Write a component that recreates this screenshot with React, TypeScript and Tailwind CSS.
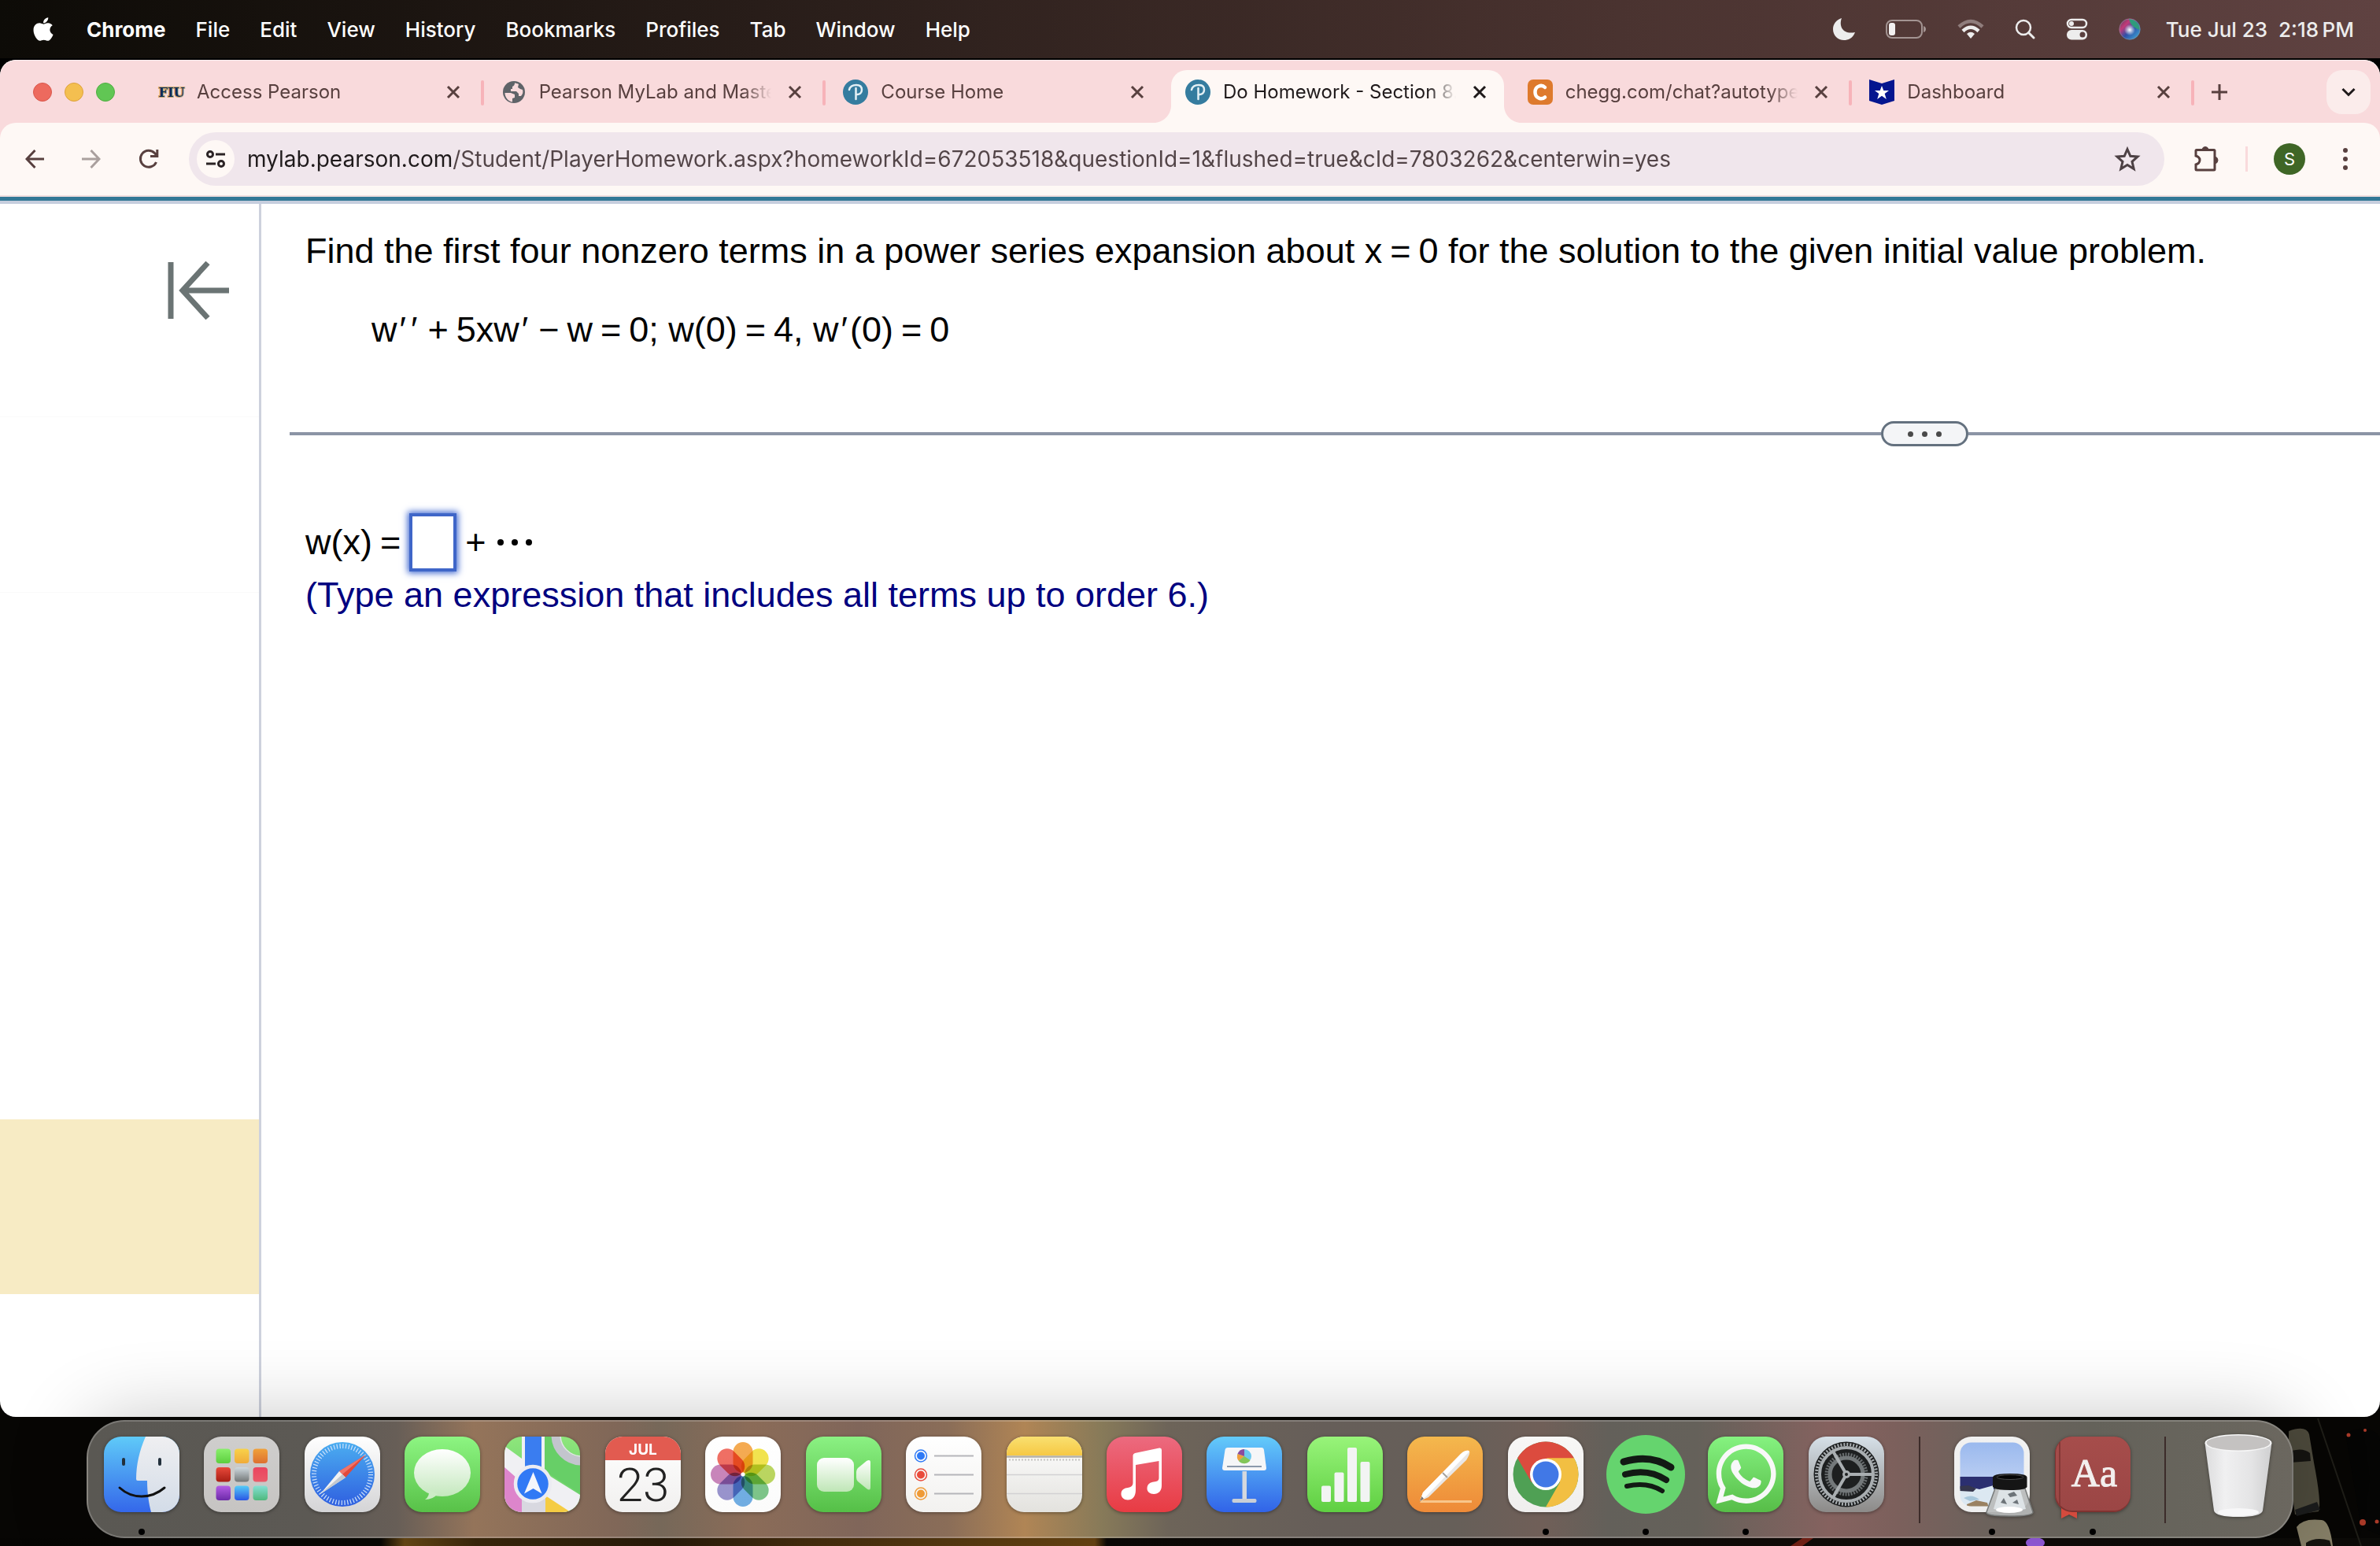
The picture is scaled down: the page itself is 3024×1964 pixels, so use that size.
import type { ReactNode } from "react";
import { FaApple, FaWhatsapp } from "react-icons/fa";

const menus = [
  "File",
  "Edit",
  "View",
  "History",
  "Bookmarks",
  "Profiles",
  "Tab",
  "Window",
  "Help",
];

function MoonIcon() {
  return (
    <svg viewBox="0 0 28 28" className="size-7" fill="#ededed">
      <path d="M11 0C7 11 13 21 28 18C25 26 19 28 14 28C6 28 0 22 0 14C0 8 4 2 11 0Z" />
    </svg>
  );
}

function BatteryIcon() {
  return (
    <svg viewBox="0 0 52 26" className="h-[26px] w-[52px]" fill="none">
      <rect x="1" y="2" width="45" height="22" rx="7" stroke="#a39492" strokeWidth="2" />
      <rect x="4" y="5" width="8" height="16" rx="3" fill="#f2f0f0" />
      <path d="M48 9Q51 10 51 13T48 17Z" fill="#a39492" />
    </svg>
  );
}

function WifiIcon() {
  return (
    <svg viewBox="0 0 34 26" className="h-[26px] w-[34px]" fill="none">
      <path d="M2 10Q17 -4 32 10" stroke="#8f7d7c" strokeWidth="4.5" />
      <path d="M7 15.5Q17 6 27 15.5" stroke="#ededed" strokeWidth="4.5" />
      <path d="M12 19Q17 14.5 22 19L17 25Z" fill="#ededed" />
    </svg>
  );
}

function SpotlightIcon() {
  return (
    <svg viewBox="0 0 26 26" className="size-[26px]" fill="none" stroke="#ededed">
      <circle cx="11" cy="11" r="9" strokeWidth="2.5" />
      <path d="M17.5 17.5L24 24" strokeWidth="3" strokeLinecap="round" />
    </svg>
  );
}

function ControlCenterIcon() {
  return (
    <svg viewBox="0 0 28 28" className="size-7" fill="none">
      <rect x="2" y="2" width="24" height="10" rx="5" stroke="#ededed" strokeWidth="2.5" />
      <circle cx="7" cy="7" r="3" fill="#ededed" />
      <rect x="1" y="15" width="26" height="12.5" rx="6" fill="#ededed" />
      <circle cx="21" cy="21" r="3.5" fill="#5a403f" />
    </svg>
  );
}

function SiriIcon() {
  return (
    <svg viewBox="0 0 28 28" className="size-7">
      <defs>
        <linearGradient id="siri" x1="0" y1="0" x2="1" y2="1">
          <stop offset="0" stopColor="#4a3f5c" />
          <stop offset=".3" stopColor="#c33a78" />
          <stop offset=".55" stopColor="#2e4fa8" />
          <stop offset="1" stopColor="#3fb9e0" />
        </linearGradient>
        <radialGradient id="siriGlow">
          <stop offset="0" stopColor="#fff" />
          <stop offset="1" stopColor="#fff" stopOpacity="0" />
        </radialGradient>
      </defs>
      <circle cx="14" cy="14" r="13.5" fill="url(#siri)" />
      <path d="M13 1C21 1 27 8 27 15C21 13 15 10 13 1Z" fill="#2f9b7c" />
      <circle cx="14" cy="15" r="7" fill="url(#siriGlow)" />
      <circle cx="14" cy="14" r="13" fill="none" stroke="#8b8f9c" strokeWidth="1" opacity=".6" />
    </svg>
  );
}

function MenuBar() {
  return (
    <header className="flex h-[74px] items-center justify-between bg-linear-to-r from-[#0d0b07] from-0% via-[#4a3330] via-68% to-[#5f4241] to-100% pr-[33px] pl-[38px] text-[26px] text-white">
      <nav className="flex items-center gap-[38px]">
        <button aria-label="Apple menu" className="text-[34px]">
          <FaApple />
        </button>
        <button className="font-bold">Chrome</button>
        {menus.map((menu) => (
          <button key={menu} className="font-medium">
            {menu}
          </button>
        ))}
      </nav>
      <div className="flex items-center gap-[39px]">
        <MoonIcon />
        <BatteryIcon />
        <WifiIcon />
        <SpotlightIcon />
        <ControlCenterIcon />
        <div className="flex items-center gap-8">
          <SiriIcon />
          <span className="font-medium whitespace-pre text-[#ededed]">Tue Jul 23{"  "}2:18{"\u2009"}PM</span>
        </div>
      </div>
    </header>
  );
}

function CloseIcon() {
  return (
    <svg viewBox="0 0 18 18" className="size-[18px]" stroke="currentColor" strokeWidth="3">
      <path d="M2 2L16 16M16 2L2 16" />
    </svg>
  );
}

function FiuIcon() {
  return (
    <svg viewBox="0 0 32 32" className="size-8 overflow-visible">
      <text
        x="16"
        y="22"
        textAnchor="middle"
        fontSize="16"
        fontWeight="700"
        fontFamily="'DejaVu Serif', serif"
        fill="#0c2a5b"
        stroke="#c5a46c"
        strokeWidth="2"
        paintOrder="stroke"
      >
        FIU
      </text>
    </svg>
  );
}

function GlobeIcon() {
  return (
    <svg viewBox="0 0 32 32" className="size-8">
      <circle cx="16" cy="16" r="14" fill="#5f6368" />
      <path d="M4.5 17H12L17 19V23L14 24V28.5C8 27.5 4.5 22 4.5 17Z" fill="#f9dadc" />
      <path
        d="M17 4.5C17 7 16 8 14 9V12H12V15H19L22 18V21H25C27 19 28 16 27 13L24 12L21 10L22 6C20 5 18 4.5 17 4.5Z"
        fill="#f9dadc"
      />
    </svg>
  );
}

function PearsonIcon() {
  return (
    <svg viewBox="0 0 32 32" className="size-8" fill="none">
      <circle cx="16" cy="16" r="16" fill="#357c9f" />
      <path
        d="M8 13C9 9 12 7 17 7C21.5 7 24 9 24 13C24 17 21.5 19.5 17 19M16.5 11V25"
        stroke="#e3f0f5"
        strokeWidth="2.5"
        strokeLinecap="round"
      />
    </svg>
  );
}

function CheggIcon() {
  return (
    <svg viewBox="0 0 32 32" className="size-8" fill="none">
      <rect width="32" height="32" rx="7" fill="#de7a2d" />
      <path d="M22 10C18 6 9.500 8 9.500 16S18 26 22 22.500" stroke="#fff" strokeWidth="4.500" strokeLinecap="round" />
    </svg>
  );
}

function DashboardIcon() {
  return (
    <svg viewBox="0 0 32 32" className="size-8">
      <path d="M0 0L16 5L32 0V27L16 32L0 27Z" fill="#04158f" />
      <path d="M16 8L18.3 14H25L19.7 18L21.8 25L16 20.8L10.2 25L12.3 18L7 14H13.7Z" fill="#fff" />
    </svg>
  );
}

const tabs = [
  { title: "Access Pearson", icon: <FiuIcon />, separator: true },
  { title: "Pearson MyLab and Mastering", icon: <GlobeIcon />, separator: true },
  { title: "Course Home", icon: <PearsonIcon /> },
  { title: "Do Homework - Section 8.3", icon: <PearsonIcon />, active: true },
  { title: "chegg.com/chat?autotype=true", icon: <CheggIcon />, separator: true },
  { title: "Dashboard", icon: <DashboardIcon />, separator: true },
];

function ActiveTabShape() {
  return (
    <span className="absolute top-3 right-2 bottom-0 left-1 rounded-t-[20px] bg-[#fef8f5]">
      <svg viewBox="0 0 22 22" className="absolute bottom-0 -left-[22px] size-[22px]" fill="#fef8f5">
        <path d="M22 0V22H0C12 22 22 12 22 0Z" />
      </svg>
      <svg viewBox="0 0 22 22" className="absolute -right-[22px] bottom-0 size-[22px]" fill="#fef8f5">
        <path d="M0 0V22H22C10 22 0 12 0 0Z" />
      </svg>
    </span>
  );
}

function Tab({ tab }: { tab: (typeof tabs)[number] }) {
  return (
    <div
      className={
        tab.active
          ? "relative min-w-0 flex-1 text-[#1f1a1b]"
          : "relative min-w-0 flex-1 text-[#58403f]"
      }
    >
      {tab.active && <ActiveTabShape />}
      <div className="relative flex h-full items-center pr-[30px] pl-[22px]">
        {tab.icon}
        <button
          role="tab"
          aria-selected={!!tab.active}
          className="ml-4 min-w-0 flex-1 overflow-hidden mask-r-from-[88%] text-left text-[24px] whitespace-nowrap"
        >
          {tab.title}
        </button>
        <button aria-label={`Close ${tab.title}`} className="ml-[21px]">
          <CloseIcon />
        </button>
      </div>
      {tab.separator && <span className="absolute top-[25px] right-0 h-8 w-1 rounded-full bg-[#f7b3b9]" />}
    </div>
  );
}

function TabStrip() {
  return (
    <div className="flex h-20 items-center rounded-t-[20px] border-t border-[#fdeff0] bg-[#f9dadc] pr-3">
      <div className="flex w-[180px] shrink-0 gap-4 pl-[42px]">
        <button aria-label="Close window" className="size-6 rounded-full border border-[#d9574c] bg-[#ed6a5e]" />
        <button aria-label="Minimize window" className="size-6 rounded-full border border-[#dea23c] bg-[#f4bf50]" />
        <button aria-label="Zoom window" className="size-6 rounded-full border border-[#4fae41] bg-[#61c654]" />
      </div>
      <div role="tablist" className="flex h-full max-w-[2608px] min-w-0 flex-1">
        {tabs.map((tab) => (
          <Tab key={tab.title} tab={tab} />
        ))}
      </div>
      <button aria-label="New tab" className="ml-[21px] text-[#58403f]">
        <svg viewBox="0 0 22 22" className="size-[22px]" stroke="currentColor" strokeWidth="3">
          <path d="M11 1V21M1 11H21" />
        </svg>
      </button>
      <button
        aria-label="Search tabs"
        className="ml-auto flex size-14 items-center justify-center rounded-[20px] bg-[#fbeceb] text-[#1f1a1b]"
      >
        <svg viewBox="0 0 18 12" className="h-3 w-[18px]" fill="none" stroke="currentColor" strokeWidth="3">
          <path d="M1.5 2L9 9.5L16.5 2" />
        </svg>
      </button>
    </div>
  );
}

function Toolbar() {
  return (
    <div className="bg-[#f9dadc]">
      <div className="flex h-[94px] items-center rounded-t-[20px] border-b-2 border-[#f1dede] bg-[#fef8f5] pr-[41px] pl-8 text-[#58403f]">
        <div className="flex shrink-0 items-center gap-12">
          <button aria-label="Back">
            <svg viewBox="0 0 24 24" className="size-6" fill="none" stroke="currentColor" strokeWidth="3">
              <path d="M24 12H2M12.5 1L2 12L12.5 23" />
            </svg>
          </button>
          <button aria-label="Forward" className="text-[#aaa09e]">
            <svg viewBox="0 0 24 24" className="size-6" fill="none" stroke="currentColor" strokeWidth="3">
              <path d="M0 12H22M11.5 1L22 12L11.5 23" />
            </svg>
          </button>
          <button aria-label="Reload">
            <svg viewBox="0 0 26 26" className="size-[26px]" fill="none" stroke="currentColor" strokeWidth="3">
              <path d="M22.5 17A10.5 10.5 0 1 1 20.5 5.5L23.5 9M23.8 1V9.5H15" />
            </svg>
          </button>
        </div>
        <div className="ml-[38px] flex h-[68px] min-w-0 flex-1 items-center rounded-full bg-[#f0e6ec] pr-[30px] pl-[10px]">
          <button
            aria-label="View site information"
            className="flex size-12 shrink-0 items-center justify-center rounded-full bg-[#fef8f5] text-[#2b2325]"
          >
            <svg viewBox="0 0 24 24" className="size-6" fill="none" stroke="currentColor" strokeWidth="3">
              <circle cx="5" cy="6" r="3.500" />
              <path d="M12 6H24M0 18H12" />
              <circle cx="19" cy="18" r="3.500" />
            </svg>
          </button>
          <input
            aria-label="Address and search bar"
            readOnly
            value="mylab.pearson.com/Student/PlayerHomework.aspx?homeworkId=672053518&questionId=1&flushed=true&cId=7803262&centerwin=yes"
            className="ml-4 min-w-0 flex-1 bg-linear-to-r from-[#1f1a1b] from-[260px] to-[#524447] to-[260px] bg-clip-text text-[28px] text-transparent outline-none"
          />
          <button aria-label="Bookmark this tab" className="text-[#4d4144]">
            <svg viewBox="0 0 34 34" className="size-[34px]" fill="none" stroke="currentColor" strokeWidth="3">
              <path d="M17 4.5L20.8 13.3L30 14L23 20.3L25.2 29.5L17 24.5L8.8 29.5L11 20.3L4 14L13.2 13.3Z" />
            </svg>
          </button>
        </div>
        <button aria-label="Extensions" className="ml-9">
          <svg viewBox="0 0 34 34" className="size-[34px]" fill="none" stroke="currentColor" strokeWidth="3">
            <path d="M4 6.5Q4 5.5 5 5.5H27Q28 5.5 28 6.5V30Q28 31 27 31H5Q4 31 4 30V24Q9 22.5 9 18.5T4 13Z" />
            <path d="M12 5Q12.5 1.5 16 1.5T20 5ZM28.5 14Q32 15 32 18.5T28.5 23Z" fill="currentColor" strokeWidth="1" />
          </svg>
        </button>
        <span className="mx-[33px] h-8 w-[3px] bg-[#f9dadc]" />
        <button aria-label="Profile" className="size-10 rounded-full bg-[#3f6626] text-[22px] text-white">
          S
        </button>
        <button aria-label="Chrome menu" className="ml-12 flex flex-col gap-[5px]">
          <span className="size-[6px] rounded-full bg-current" />
          <span className="size-[6px] rounded-full bg-current" />
          <span className="size-[6px] rounded-full bg-current" />
        </button>
      </div>
    </div>
  );
}

function Sidebar() {
  return (
    <aside className="w-[332px] shrink-0 border-r-[3px] border-[#cdd1dd]">
      <div className="flex h-[271px] justify-end border-b border-[#fafafa] pt-[73px] pr-[38px]">
        <button aria-label="Collapse panel" className="h-[74px] w-[78px]">
          <svg viewBox="0 0 78 74" fill="none" stroke="#6b7474" strokeWidth="7">
            <path d="M4 1V73" />
            <path d="M78 37H19M51 2L19 37L51 72" />
          </svg>
        </button>
      </div>
      <div className="h-[223px] border-b border-[#fafafa]" />
      <div className="h-[223px]" />
      <div className="h-[223px]" />
      <div className="h-[223px]" />
      <div className="h-[222px] bg-[#f7ebc4]" />
    </aside>
  );
}

function Op({ children }: { children: ReactNode }) {
  return <span className="px-[10px]">{children}</span>;
}

function Prime() {
  return <span className="px-[3px]">′</span>;
}

function Exercise() {
  return (
    <main className="min-w-0 flex-1 pl-9 font-['Liberation_Sans',Arial,sans-serif] text-[45px] text-black">
      <div className="pl-5">
        <p className="pt-[34px] leading-[52px]">
          Find the first four nonzero terms in a power series expansion about x<Op>=</Op>0 for the solution to the given
          initial value problem.
        </p>
        <p className="pt-12 pl-[84px] leading-[52px]">
          w<Prime />
          <Prime />
          <Op>+</Op>5xw
          <Prime />
          <Op>−</Op>w<Op>=</Op>0; w(0)<Op>=</Op>4, w<Prime />
          (0)<Op>=</Op>0
        </p>
      </div>
      <div className="mt-[90px] flex items-center">
        <span className="h-1 flex-1 bg-[#8b94a5]" />
        <button
          aria-label="Resize panels"
          className="flex h-8 w-[111px] items-center justify-center gap-[11px] rounded-full border-[3px] border-[#64717f] bg-[#f4f5f7]"
        >
          <span className="size-[7px] rounded-full bg-[#4a4a4a]" />
          <span className="size-[7px] rounded-full bg-[#4a4a4a]" />
          <span className="size-[7px] rounded-full bg-[#4a4a4a]" />
        </button>
        <span className="h-1 w-[523px] bg-[#8b94a5]" />
      </div>
      <div className="pt-[85px] pl-5">
        <div className="flex items-center">
          <label htmlFor="answer">
            w(x)<span className="pl-[10px]">=</span>
          </label>
          <input
            id="answer"
            className="ml-[11px] h-[74px] w-[60px] border-4 border-[#3f66c8] bg-white px-1 shadow-[0_0_8px_2px_#4169d1] outline-none"
          />
          <span className="pl-[11px]">+</span>
          <span className="flex gap-[10px] pl-[14px]">
            <span className="size-2 rounded-full bg-black" />
            <span className="size-2 rounded-full bg-black" />
            <span className="size-2 rounded-full bg-black" />
          </span>
        </div>
        <p className="pt-1 leading-[52px] text-[#000080]">
          (Type an expression that includes all terms up to order 6.)
        </p>
      </div>
    </main>
  );
}

function Gradient({ id, from, to }: { id: string; from: string; to: string }) {
  return (
    <linearGradient id={id} x1="0" y1="0" x2="0" y2="1">
      <stop offset="0" stopColor={from} />
      <stop offset="1" stopColor={to} />
    </linearGradient>
  );
}

// rounded tile shared by most dock icons
function Tile({ id, from, to, children }: { id: string; from: string; to: string; children?: ReactNode }) {
  return (
    <svg viewBox="0 0 96 96" className="size-24 overflow-visible drop-shadow-[0_1px_2px_rgba(0,0,0,0.4)]">
      <defs>
        <Gradient id={id} from={from} to={to} />
        <clipPath id={`${id}-clip`}>
          <rect width="96" height="96" rx="22" />
        </clipPath>
      </defs>
      <rect width="96" height="96" rx="22" fill={`url(#${id})`} />
      {children}
    </svg>
  );
}

function Finder() {
  return (
    <Tile id="finder" from="#5fcaf8" to="#3467ea">
      <defs>
        <Gradient id="finderFace" from="#efeff1" to="#d3dce8" />
      </defs>
      <path
        d="M53 0C45 18 41 36 41 54Q41 56 43 56H55C55 72 57 84 60 96H96V0Z"
        fill="url(#finderFace)"
        clipPath="url(#finder-clip)"
      />
      <path d="M25 29V35M71 29V35" stroke="#22303c" strokeWidth="4" strokeLinecap="round" />
      <path d="M20 65Q32 76 48 76T77 65" fill="none" stroke="#111" strokeWidth="3" strokeLinecap="round" />
    </Tile>
  );
}

const launchpadApps = [
  ["#8aef6c", "#5ccf3e"],
  ["#f8d24a", "#f0ab39"],
  ["#f0a13a", "#dd7030"],
  ["#e8493a", "#a81e14"],
  ["#cfd9df", "#737777"],
  ["#ea4560", "#ea5a68"],
  ["#b45ce4", "#6c2ba8"],
  ["#55ccf8", "#2a55e4"],
  ["#84e0d4", "#4fb87c"],
];

function Launchpad() {
  return (
    <Tile id="launchpad" from="#cfcecd" to="#c6c4c2">
      {launchpadApps.map(([from, to], i) => (
        <g key={from}>
          <defs>
            <Gradient id={`lp${i}`} from={from} to={to} />
          </defs>
          <rect
            x={15.5 + (i % 3) * 23.5}
            y={15.5 + Math.floor(i / 3) * 23.5}
            width="18.5"
            height="18.5"
            rx="4"
            fill={`url(#lp${i})`}
          />
        </g>
      ))}
    </Tile>
  );
}

function Safari() {
  return (
    <Tile id="safari" from="#ffffff" to="#d4d4d6">
      <defs>
        <Gradient id="safariDial" from="#4badf0" to="#2f5fe0" />
      </defs>
      <circle cx="48" cy="48" r="41" fill="url(#safariDial)" />
      <circle cx="48" cy="48" r="36" fill="none" stroke="#cfe2fa" strokeWidth="6" strokeDasharray="1.2 2.57" />
      <path d="M78 23L52 52L44 44Z" fill="#e2493b" />
      <path d="M78 23L48 48L44 44Z" fill="#f07469" />
      <path d="M20 73L52 52L44 44Z" fill="#f2f2f2" />
      <path d="M20 73L48 48L52 52Z" fill="#c2c8cf" />
    </Tile>
  );
}

function Messages() {
  return (
    <Tile id="messages" from="#8df582" to="#58c148">
      <defs>
        <Gradient id="bubble" from="#ffffff" to="#c4e8bd" />
      </defs>
      <ellipse cx="48" cy="46" rx="36" ry="30" fill="url(#bubble)" />
      <path d="M31 68Q32 76 26 80Q36 80 42 73Z" fill="#cdecc6" />
    </Tile>
  );
}

function Maps() {
  return (
    <Tile id="maps" from="#8ee67c" to="#63cb66">
      <g clipPath="url(#maps-clip)">
        <path d="M0 12L22 28V0H51V46L96 74V96H0Z" fill="#f0f0f3" />
        <path d="M0 39L24 60V96H0Z" fill="#dd85cb" />
        <path d="M22 78H52V96H22Z" fill="#d8d8e0" />
        <path d="M52 75L84 96H52Z" fill="#f5cc43" />
        <path d="M51 0V44L96 72V30H80L60 0Z" fill="#67cf67" />
        <path d="M26 0H47V50H26Z" fill="#3a7df0" />
        <circle cx="98" cy="-2" r="33" fill="none" stroke="#c3c5cd" strokeWidth="11" />
        <circle cx="98" cy="-2" r="27" fill="none" stroke="#e3e3e8" strokeWidth="1.5" />
      </g>
      <circle cx="36" cy="60" r="22" fill="#3179f5" stroke="#ececf2" strokeWidth="4.5" />
      <path d="M36.5 45L47.5 72.5L36.5 66L25 72.5Z" fill="#f4f6fb" />
    </Tile>
  );
}

function Calendar() {
  return (
    <Tile id="calendar" from="#ffffff" to="#f1f0ef">
      <path d="M0 30V0H96V30Z" fill="#e25b50" clipPath="url(#calendar-clip)" />
      <text x="48" y="23" textAnchor="middle" fontSize="19" fontWeight="700" fill="#fff">
        JUL
      </text>
      <text x="48" y="82" textAnchor="middle" fontSize="60" fontWeight="300" fontFamily="Roboto, sans-serif" fill="#222">
        23
      </text>
    </Tile>
  );
}

const petals = ["#f4a03a", "#f1e136", "#b3d24b", "#6cc07b", "#5ea4e2", "#8c86c9", "#c375b3", "#ee5b4e"];

function Photos() {
  return (
    <Tile id="photos" from="#ffffff" to="#fbfbfb">
      {petals.map((color, i) => (
        <rect
          key={color}
          x="35.5"
          y="7"
          width="25"
          height="39"
          rx="12.5"
          fill={color}
          opacity=".88"
          className="mix-blend-multiply"
          transform={`rotate(${i * 45} 48 48)`}
        />
      ))}
      <circle cx="48" cy="48" r="2.5" fill="#fff" />
    </Tile>
  );
}

function FaceTime() {
  return (
    <Tile id="facetime" from="#8bf183" to="#55bf47">
      <defs>
        <Gradient id="camera" from="#ffffff" to="#bfe6b6" />
      </defs>
      <rect x="14" y="27" width="47" height="43" rx="9" fill="url(#camera)" />
      <path d="M64 45Q64 42 66 40L77 31Q82 28 82 33V64Q82 70 77 66L66 57Q64 55 64 52Z" fill="url(#camera)" />
    </Tile>
  );
}

function Reminders() {
  return (
    <Tile id="reminders" from="#ffffff" to="#f2f1ef">
      {["#2f7af6", "#e94b3c", "#ef9a36"].map((color, i) => (
        <g key={color}>
          <circle cx="19" cy={24.5 + i * 24} r="7.5" fill="none" stroke={color} strokeWidth="1.5" />
          <circle cx="19" cy={24.5 + i * 24} r="5" fill={color} />
          <path d={`M36 ${24.5 + i * 24}H86`} stroke="#b5b5ba" strokeWidth="2" />
        </g>
      ))}
    </Tile>
  );
}

function Notes() {
  return (
    <Tile id="notes" from="#ffffff" to="#e3e2de">
      <defs>
        <Gradient id="notesTop" from="#f9e070" to="#f6c844" />
      </defs>
      <path d="M0 24V0H96V24Z" fill="url(#notesTop)" clipPath="url(#notes-clip)" />
      <path d="M0 25.5H96" stroke="#b5b0a5" strokeWidth="2.5" />
      <path d="M3 29.5H94" stroke="#c4c2bf" strokeWidth="2" strokeDasharray="2 2" />
      <path d="M0 48.5H96M0 72.5H96" stroke="#d2d1d3" strokeWidth="1.5" />
    </Tile>
  );
}

function Music() {
  return (
    <Tile id="music" from="#ec6a7f" to="#e83b43">
      <path
        d="M33.5 24Q33.5 22 36 21L67 14.5Q70 14 70 17V62C70 69 66 73 60 73C55 73 51.5 70 51.5 66C51.5 60 56 58 60 57.5Q66.5 57 66.5 53V31L37 36V68C37 76 33 80.5 27 80.5C22 80.5 18.5 77 18.5 73C18.5 67 23 65.5 27 65Q33.5 64 33.5 59Z"
        fill="#fff"
      />
    </Tile>
  );
}

function Keynote() {
  return (
    <Tile id="keynote" from="#63cbfa" to="#3163e8">
      <path d="M27 14H70Q72.5 14 73 17L76 40Q76 43 73 43H23Q20 43 20 40L23.5 17Q24 14 27 14Z" fill="#f5f6f8" />
      <path d="M26 37H70V39H26Z" fill="#8b99ab" />
      <circle cx="48" cy="25" r="9" fill="#6ec9ef" />
      <path d="M48 25V16A9 9 0 0 0 39.5 22Z" fill="#8b4a9e" />
      <path d="M48 25L39.5 22A9 9 0 0 0 41 31Z" fill="#f0a03e" />
      <path d="M48 25L41 31A9 9 0 0 0 55.5 30Z" fill="#83c659" />
      <path d="M45.5 44H51V80H45.5Z" fill="#d4d8de" />
      <rect x="32.5" y="79" width="31" height="5" rx="2" fill="#c9ced6" />
    </Tile>
  );
}

function Numbers() {
  return (
    <Tile id="numbers" from="#98f47a" to="#5fcf42">
      <g fill="#f2f4f3">
        <rect x="18" y="62.5" width="12" height="20.5" rx="2" />
        <rect x="34.5" y="45.5" width="12" height="37.5" rx="2" />
        <rect x="51" y="14" width="12" height="69" rx="2" />
        <rect x="67.5" y="32" width="12" height="51" rx="2" />
      </g>
    </Tile>
  );
}

function Pages() {
  return (
    <Tile id="pages" from="#f4b84d" to="#ee8a38">
      <path d="M18 81H82V84H16Z" fill="#f8c68b" />
      <path d="M16 82L20 71L68 22C73 17 78 17 79 19C80 21 78 25 75 30L27 77Z" fill="#e9e7e6" />
      <path d="M16 82L20 71L68 22C73 17 78 17 79 19L24 76Z" fill="#fff" />
      <path d="M45 46L51 52" stroke="#a5a19c" strokeWidth="2" />
      <path d="M16 82L18.5 76L21 79Z" fill="#77706b" />
    </Tile>
  );
}

function Chrome() {
  return (
    <Tile id="chrome" from="#f8f7f6" to="#efeeed">
      <circle cx="48" cy="48" r="41.5" fill="#4fa054" />
      <path d="M48 48L12.1 27.2A41.5 41.5 0 0 1 83.9 27.2Z" fill="#dc4b3e" />
      <path d="M48 27.2H83.9A41.5 41.5 0 0 1 48 89.5L66 58Z" fill="#f2bf42" />
      <path d="M12.1 27.2H50L30 58.2Z" fill="#dc4b3e" />
      <circle cx="48" cy="48" r="20" fill="#fff" />
      <circle cx="48" cy="48" r="16.5" fill="#4178e6" />
    </Tile>
  );
}

function Spotify() {
  return (
    <svg viewBox="-48 -48 96 96" className="size-24 overflow-visible" fill="none" stroke="#121a14" strokeLinecap="round">
      <circle r="50" fill="#65d46e" stroke="none" />
      <path d="M-28 -16Q6 -26 32 -9" strokeWidth="9" />
      <path d="M-26 0Q3 -8 26 7" strokeWidth="8" />
      <path d="M-24 15Q2 9 21 21" strokeWidth="6" />
    </svg>
  );
}

function WhatsApp() {
  return (
    <Tile id="whatsapp" from="#85f280" to="#57bd48">
      <FaWhatsapp x="5" y="4" size={87} color="#f8f8f8" />
    </Tile>
  );
}

function Settings() {
  return (
    <Tile id="settings" from="#d6e0e8" to="#8c8a88">
      <circle cx="48" cy="48" r="41.5" fill="#1d1f20" />
      <g fill="none" stroke="#a9aeb1">
        <circle cx="48" cy="48" r="38" strokeWidth="4" strokeDasharray="2 1.98" />
        <circle cx="48" cy="48" r="34" strokeWidth="4" />
        <circle cx="48" cy="48" r="25" stroke="#676b6d" strokeWidth="5" strokeDasharray="2 1.5" />
        <circle cx="48" cy="48" r="21" stroke="#73787a" strokeWidth="5" />
        <path d="M48 48H81M48 48L31.5 19.5M48 48L31.5 76.5" strokeWidth="4" />
      </g>
      <circle cx="48" cy="48" r="5" fill="#a9aeb1" />
      <circle cx="48" cy="48" r="2" fill="#1d1f20" />
    </Tile>
  );
}

function Preview() {
  return (
    <Tile id="preview" from="#f1f1f1" to="#eeeeee">
      <defs>
        <Gradient id="sky" from="#9ab9ee" to="#b9cdf2" />
        <clipPath id="photo">
          <rect x="7.5" y="7.5" width="81" height="81" rx="14" />
        </clipPath>
      </defs>
      <g clipPath="url(#photo)">
        <rect x="7" y="7" width="82" height="46" fill="url(#sky)" />
        <rect x="7" y="51" width="82" height="16" fill="#2b2f70" />
        <path d="M7 66L20 64L32 67L50 62V90H7Z" fill="#dce8f2" />
        <path d="M7 63L18 62L28 66L24 70L7 69Z" fill="#35364d" />
        <path d="M12 78Q22 72 32 80L20 82Z" fill="#a8c7dc" />
        <path d="M16 86L28 81L42 84L44 90H16Z" fill="#9a8161" />
      </g>
      <path d="M52 66L41 96Q40 101 70 101T100 96L90 66Z" fill="#b9bbbb" fillOpacity=".92" stroke="#777a79" strokeWidth="1.5" />
      <path d="M57 68L50 92Q70 97 91 92L84 68Z" fill="#dde3e6" />
      <path d="M59 84L63 78L67 86ZM68 73L76 70L80 75L71 77ZM74 84L80 80L82 86Z" fill="#6d7479" />
      <ellipse cx="70" cy="93" rx="17" ry="4" fill="#fff" />
      <path d="M49 52Q49 47 71 47T92.5 52V64Q90 68 71 68T49 64Z" fill="#151515" />
      <ellipse cx="71" cy="51.5" rx="17" ry="3" fill="#050505" stroke="#4c4c4c" strokeWidth="1" />
    </Tile>
  );
}

function Dictionary() {
  return (
    <Tile id="dictionary" from="#a64d4b" to="#9b4645">
      <path d="M8 90H28V104L18 99L8 104Z" fill="#d34a3d" />
      <rect width="96" height="96" rx="22" fill="#7f3230" />
      <rect x="1" width="95" height="94" rx="21" fill="url(#dictionary)" />
      <path d="M6 7V87" stroke="#843836" strokeWidth="2" />
      <text
        x="50"
        y="63"
        textAnchor="middle"
        fontSize="50"
        fontFamily="'Liberation Serif', serif"
        fill="#f3efee"
        stroke="#f3efee"
        strokeWidth="1"
      >
        Aa
      </text>
    </Tile>
  );
}

function Trash() {
  return (
    <svg viewBox="0 0 96 96" className="size-24 overflow-visible drop-shadow-[0_1px_2px_rgba(0,0,0,0.4)]">
      <defs>
        <linearGradient id="trash">
          <stop offset="0" stopColor="#dcdcdd" />
          <stop offset=".3" stopColor="#f0f0f1" />
          <stop offset=".7" stopColor="#e4e4e5" />
          <stop offset="1" stopColor="#cfcfd0" />
        </linearGradient>
      </defs>
      <path d="M5.5 8L17 94Q19 102 48 102T79 94L90.5 8Z" fill="url(#trash)" />
      <ellipse cx="48" cy="8" rx="42.5" ry="11" fill="#f6f6f6" />
      <ellipse cx="48" cy="8" rx="40.5" ry="9.5" fill="#c4c2c1" />
      <ellipse cx="48" cy="96" rx="26" ry="5" fill="#f7f7f8" />
    </svg>
  );
}

const apps = [
  { name: "Finder", icon: <Finder />, running: true },
  { name: "Launchpad", icon: <Launchpad /> },
  { name: "Safari", icon: <Safari /> },
  { name: "Messages", icon: <Messages /> },
  { name: "Maps", icon: <Maps /> },
  { name: "Calendar", icon: <Calendar /> },
  { name: "Photos", icon: <Photos /> },
  { name: "FaceTime", icon: <FaceTime /> },
  { name: "Reminders", icon: <Reminders /> },
  { name: "Notes", icon: <Notes /> },
  { name: "Music", icon: <Music /> },
  { name: "Keynote", icon: <Keynote /> },
  { name: "Numbers", icon: <Numbers /> },
  { name: "Pages", icon: <Pages /> },
  { name: "Google Chrome", icon: <Chrome />, running: true },
  { name: "Spotify", icon: <Spotify />, running: true },
  { name: "WhatsApp", icon: <WhatsApp />, running: true },
  { name: "System Settings", icon: <Settings /> },
];

const recents = [
  { name: "Preview", icon: <Preview />, running: true },
  { name: "Dictionary", icon: <Dictionary />, running: true },
];

function DockItem({ name, icon, running }: { name: string; icon: ReactNode; running?: boolean }) {
  return (
    <button aria-label={name} className="flex flex-1 flex-col items-center">
      {icon}
      {running && <span className="mt-[21px] size-2 rounded-full bg-black" />}
    </button>
  );
}

function DockDivider() {
  return (
    <div className="flex w-[58px] justify-center">
      <span className="h-[110px] w-0.5 bg-[#3c2c2a]" />
    </div>
  );
}

function Dock() {
  return (
    <footer className="relative mx-auto mt-1 mb-[10px] flex h-[150px] w-full max-w-[2804px] items-start rounded-[48px] border-2 border-white/20 bg-[linear-gradient(90deg,#5a5853_0%,#5c5954_10%,#675e57_14%,#94745a_17.5%,#806758_24%,#766859_26%,#8b6c58_30%,#80665a_35%,#8a6d58_39%,#b08555_42.5%,#877a59_46%,#6d6459_49%,#665e59_56%,#665f59_62%,#705f58_66%,#63605a_69%,#65615a_73%,#85625f_79%,#7c605c_82%,#6c625c_86%,#64625a_91%,#6b675f_100%)] px-1 pt-[19px] shadow-[0_0_100px_rgba(0,0,0,0.24)]">
      {apps.map((app) => (
        <DockItem key={app.name} {...app} />
      ))}
      <DockDivider />
      {recents.map((app) => (
        <DockItem key={app.name} {...app} />
      ))}
      <DockDivider />
      <DockItem name="Trash" icon={<Trash />} />
    </footer>
  );
}

// night street seen from above, only its edges show around the windows
function Wallpaper() {
  return (
    <svg
      viewBox="0 0 3024 184"
      preserveAspectRatio="none"
      className="absolute bottom-0 left-0 h-[184px] w-full"
      aria-hidden="true"
    >
      <defs>
        <linearGradient id="street">
          <stop offset="0" stopColor="#060503" />
          <stop offset=".16" stopColor="#0a0804" />
          <stop offset=".17" stopColor="#6e4d17" />
          <stop offset=".2" stopColor="#3f2a0d" />
          <stop offset=".28" stopColor="#2c1d0b" />
          <stop offset=".34" stopColor="#4a300f" />
          <stop offset=".4" stopColor="#5c3d12" />
          <stop offset=".46" stopColor="#6e4814" />
          <stop offset=".465" stopColor="#0d0a06" />
          <stop offset=".8" stopColor="#120d0a" />
          <stop offset="1" stopColor="#0b0a07" />
        </linearGradient>
      </defs>
      <rect width="3024" height="184" fill="#070604" />
      <rect y="174" width="3024" height="10" fill="url(#street)" />
      <path d="M2945 22L3000 184" stroke="#1f1e18" strokeWidth="2" />
      <path d="M2908 38Q2930 30 2934 42L2940 78Q2950 130 2946 140L2916 144L2908 80Z" fill="#4d4a3c" />
      <path d="M2908 64Q2926 58 2935 66L2936 76L2910 78Z" fill="#151411" />
      <path d="M2916 138L2944 128L2948 138L2918 146Z" fill="#1b1c1c" />
      <path d="M2918 160Q2926 148 2950 151Q2960 152 2964 184H2924Z" fill="#857e66" />
      <path d="M2930 180Q2942 172 2960 177L2962 184H2930Z" fill="#15140f" />
      <path d="M2981 46Q2984 34 3004 36Q3022 36 3024 50V170L3000 160L2990 100Z" fill="#050504" />
      <g fill="#a93a28">
        <circle cx="2984" cy="43" r="2.5" />
        <circle cx="3005" cy="37" r="2" />
        <circle cx="3002" cy="154" r="4" />
        <circle cx="3020" cy="153" r="2.5" />
      </g>
      <ellipse cx="2586" cy="180" rx="12" ry="7" fill="#9b5fe8" />
      <path d="M2275 184L2290 174H2304L2290 184Z" fill="#7c2418" />
    </svg>
  );
}

export default function App() {
  return (
    <div className="relative flex min-h-screen flex-col overflow-hidden bg-black font-[Inter,sans-serif]">
      <Wallpaper />
      <MenuBar />
      <div className="relative mt-0.5 flex flex-1 flex-col overflow-hidden rounded-[20px] bg-white">
        <TabStrip />
        <Toolbar />
        <div className="h-[9px] border-b-4 border-[#c6cede] bg-[#337896]" />
        <div className="flex flex-1">
          <Sidebar />
          <Exercise />
        </div>
      </div>
      <Dock />
    </div>
  );
}
